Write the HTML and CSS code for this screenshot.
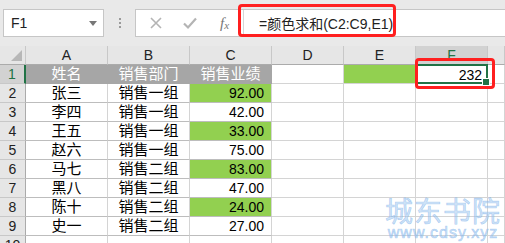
FILE: index.html
```html
<!DOCTYPE html>
<html lang="zh-CN">
<head>
    <meta charset="UTF-8">
    <title>颜色求和</title>
    <link rel="stylesheet" href="styles.css">
</head>
<body>
    <div class="app">
        <!-- formula bar -->
        <div class="bar">
            <div class="namebox">
                <span>F1</span>
                <span class="drop"></span>
            </div>
            <div class="grip"><i></i><i></i><i></i></div>
            <div class="formula">
                <div class="tools">
                    <svg class="ico" width="14" height="14" viewBox="0 0 14 14"><path d="M2 2 L12 12 M12 2 L2 12" stroke="#b4b4b4" stroke-width="1.6" fill="none"/></svg>
                    <svg class="ico" width="16" height="14" viewBox="0 0 16 14"><path d="M2 7.5 L6 11.5 L14 2.5" stroke="#b4b4b4" stroke-width="2.2" fill="none"/></svg>
                    <span class="fx">f<sub>x</sub></span>
                </div>
                <div class="input">=颜色求和(C2:C9,E1)</div>
            </div>
        </div>

        <!-- sheet -->
        <div class="sheet">
            <div class="corner"></div>
            <div class="colh">A</div>
            <div class="colh">B</div>
            <div class="colh">C</div>
            <div class="colh">D</div>
            <div class="colh">E</div>
            <div class="colh sel">F</div>
            <div class="colh"></div>

            <div class="rowh sel">1</div>
            <div class="c head">姓名</div>
            <div class="c head">销售部门</div>
            <div class="c head">销售业绩</div>
            <div class="c"></div>
            <div class="c green"></div>
            <div class="c num active">232</div>
            <div class="c"></div>

            <div class="rowh">2</div>
            <div class="c t">张三</div>
            <div class="c t">销售一组</div>
            <div class="c t val green">92.00</div>
            <div class="c"></div><div class="c"></div><div class="c"></div><div class="c"></div>

            <div class="rowh">3</div>
            <div class="c t">李四</div>
            <div class="c t">销售一组</div>
            <div class="c t val">42.00</div>
            <div class="c"></div><div class="c"></div><div class="c"></div><div class="c"></div>

            <div class="rowh">4</div>
            <div class="c t">王五</div>
            <div class="c t">销售一组</div>
            <div class="c t val green">33.00</div>
            <div class="c"></div><div class="c"></div><div class="c"></div><div class="c"></div>

            <div class="rowh">5</div>
            <div class="c t">赵六</div>
            <div class="c t">销售一组</div>
            <div class="c t val">75.00</div>
            <div class="c"></div><div class="c"></div><div class="c"></div><div class="c"></div>

            <div class="rowh">6</div>
            <div class="c t">马七</div>
            <div class="c t">销售二组</div>
            <div class="c t val green">83.00</div>
            <div class="c"></div><div class="c"></div><div class="c"></div><div class="c"></div>

            <div class="rowh">7</div>
            <div class="c t">黑八</div>
            <div class="c t">销售二组</div>
            <div class="c t val">47.00</div>
            <div class="c"></div><div class="c"></div><div class="c"></div><div class="c"></div>

            <div class="rowh">8</div>
            <div class="c t">陈十</div>
            <div class="c t">销售二组</div>
            <div class="c t val green">24.00</div>
            <div class="c"></div><div class="c"></div><div class="c"></div><div class="c"></div>

            <div class="rowh">9</div>
            <div class="c t">史一</div>
            <div class="c t">销售二组</div>
            <div class="c t val">27.00</div>
            <div class="c"></div><div class="c"></div><div class="c"></div><div class="c"></div>

            <div class="rowh">10</div>
            <div class="c"></div><div class="c"></div><div class="c"></div>
            <div class="c"></div><div class="c"></div><div class="c"></div><div class="c"></div>
        </div>

        <!-- callouts -->
        <div class="mark mark-formula"></div>
        <div class="mark mark-cell"></div>

        <div class="watermark">
            <div class="wm-big">城东书院</div>
            <div class="wm-small">www.cdsy.xyz</div>
        </div>
    </div>
</body>
</html>
```

FILE: styles.css
```css
* {
    box-sizing: border-box;
}
body {
    margin: 0;
    background: #e6e6e6;
    font-family: "Liberation Sans", "Noto Sans CJK SC", sans-serif;
    color: #000;
}
.app {
    position: relative;
    width: 505px;
    height: 243px;
    overflow: hidden;
}
.bar {
    height: 46px;
    display: flex;
    align-items: flex-start;
    padding: 9px 0 0 3px;
    background: #e9e9e9;
}
.namebox {
    width: 101px;
    height: 28px;
    background: #fff;
    border: 1px solid #c6c6c6;
    display: flex;
    align-items: center;
    justify-content: space-between;
    padding: 0 6px 0 7px;
    font-size: 14px;
    color: #222;
}
.drop {
    width: 0;
    height: 0;
    border-left: 4px solid transparent;
    border-right: 4px solid transparent;
    border-top: 5px solid #777;
}
.grip {
    width: 31px;
    height: 28px;
    display: flex;
    flex-direction: column;
    align-items: center;
    justify-content: center;
    gap: 2px;
}
.grip i {
    width: 2px;
    height: 2px;
    background: #9a9a9a;
}
.formula {
    flex: 1;
    height: 28px;
    background: #fff;
    border: 1px solid #c6c6c6;
    border-right: none;
    display: flex;
    align-items: center;
}
.tools {
    width: 108px;
    height: 100%;
    display: flex;
    align-items: center;
    padding-left: 13px;
    gap: 19px;
    border-right: 1px solid #d6d6d6;
}
.fx {
    font-family: "Liberation Serif", serif;
    font-style: italic;
    font-size: 15px;
    color: #777;
    margin-left: 3px;
}
.fx sub {
    font-size: 11px;
    vertical-align: -1px;
}
.input {
    padding-left: 15px;
    font-size: 14px;
    color: #222;
}
.sheet {
    display: grid;
    grid-template-columns: 26px 82px 82px 82px 72px 72px 72px 1fr;
    grid-auto-rows: 19px;
    background: #fff;
}
.corner {
    position: relative;
    background: #e6e6e6;
    border-right: 1px solid #c8c8c8;
    border-bottom: 1px solid #ababab;
}
.corner::after {
    content: "";
    position: absolute;
    right: 3px;
    bottom: 3px;
    border-left: 11px solid transparent;
    border-bottom: 11px solid #b7b7b7;
}
.colh {
    background: #e6e6e6;
    border-right: 1px solid #c8c8c8;
    border-bottom: 1px solid #ababab;
    text-align: center;
    font-size: 14px;
    line-height: 19px;
    color: #222;
}
.colh.sel {
    background: #d2d2d2;
    color: #217346;
}
.rowh {
    background: #e6e6e6;
    border-right: 1px solid #ababab;
    border-bottom: 1px solid #c8c8c8;
    text-align: center;
    font-size: 14px;
    line-height: 19px;
    color: #222;
}
.rowh.sel {
    background: #d2d2d2;
    color: #217346;
    border-right: 2px solid #217346;
}
.c {
    border-right: 1px solid #d4d4d4;
    border-bottom: 1px solid #d4d4d4;
    font-size: 14px;
    line-height: 19px;
    white-space: nowrap;
}
.c.t {
    text-align: center;
    font-size: 15px;
    line-height: 18px;
    border-bottom-color: #bdbdbd;
}
.c.head {
    background: #a6a6a6;
    color: #fff;
    text-align: center;
    font-size: 15px;
    line-height: 18px;
    border-color: #a6a6a6;
}
.c.val {
    text-align: right;
    font-size: 14px;
    line-height: 19px;
    padding-right: 7px;
}
.c.green {
    background: #92d050;
}
.c.num {
    text-align: right;
    padding-right: 4px;
}
.c.active {
    position: relative;
    border: 2px solid #217346;
    margin: -1px 0 0 -1px;
    line-height: 16px;
    padding-top: 1px;
}
.c.active::after {
    content: "";
    position: absolute;
    right: -4px;
    bottom: -4px;
    width: 6px;
    height: 6px;
    background: #217346;
    border: 1px solid #fff;
}
.mark {
    position: absolute;
    border: 3px solid #ff1f1f;
    border-radius: 4px;
}
.mark-formula {
    left: 238px;
    top: 4px;
    width: 158px;
    height: 33px;
}
.mark-cell {
    left: 415px;
    top: 58px;
    width: 80px;
    height: 31px;
}
.watermark {
    position: absolute;
    left: 385px;
    top: 195px;
    color: rgba(160, 200, 240, 0.5);
    text-align: center;
    -webkit-text-stroke: 0.6px rgba(120, 175, 235, 0.55);
    font-family: "Noto Sans CJK SC", sans-serif;
}
.wm-big {
    font-size: 28px;
    line-height: 30px;
    letter-spacing: 1px;
    white-space: nowrap;
}
.wm-small {
    font-family: "Liberation Sans", sans-serif;
    font-size: 16px;
    line-height: 16px;
    letter-spacing: 1px;
    white-space: nowrap;
}
```
